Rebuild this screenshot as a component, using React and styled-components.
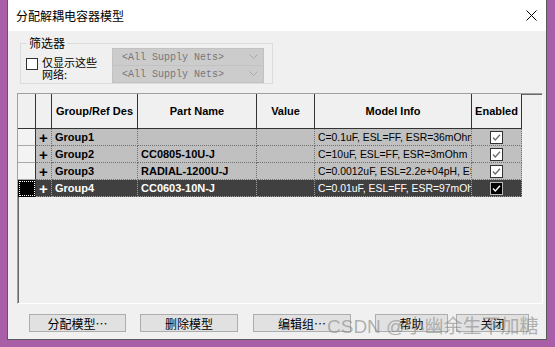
import React from 'react';
import styled, { createGlobalStyle } from 'styled-components';

const GlobalStyle = createGlobalStyle`
  html, body {
    margin: 0;
    padding: 0;
    background: #a95fa7;
    width: 555px;
    height: 347px;
    overflow: hidden;
  }
  * {
    box-sizing: border-box;
  }
`;

const cjk = `"Noto Sans CJK SC", "Noto Sans", sans-serif`;
const sans = `"Liberation Sans", Arial, sans-serif`;

const groups = [
  { name: 'Group1', part: '', value: '', model: 'C=0.1uF, ESL=FF, ESR=36mOhm' },
  { name: 'Group2', part: 'CC0805-10U-J', value: '', model: 'C=10uF, ESL=FF, ESR=3mOhm' },
  { name: 'Group3', part: 'RADIAL-1200U-J', value: '', model: 'C=0.0012uF, ESL=2.2e+04pH, ESR=1mOhm' },
  { name: 'Group4', part: 'CC0603-10N-J', value: '', model: 'C=0.01uF, ESL=FF, ESR=97mOhm', selected: true },
];

const buttons = [
  { label: '分配模型…', w: 97, ml: 12 },
  { label: '删除模型', w: 98, ml: 14 },
  { label: '编辑组…', w: 98, ml: 15 },
  { label: '帮助', w: 73, ml: 24 },
  { label: '关闭', w: 73, ml: 8 },
];

const Window = styled.div`
  position: relative;
  margin-left: 7px;
  width: 540px;
  height: 340px;
  background: #f0f0f0;
  border: 1px solid #5a5a5a;
  border-top: none;
  display: flex;
  flex-direction: column;
`;

const TitleBar = styled.div`
  height: 31px;
  background: #fff;
  display: flex;
  align-items: center;
  justify-content: space-between;
  padding: 0 9px 0 8px;
`;

const Title = styled.span`
  font-family: ${cjk};
  font-size: 12px;
  color: #000;
`;

const Body = styled.div`
  flex: 1;
  padding: 0 3px 0 9px;
  display: flex;
  flex-direction: column;
`;

const FilterBox = styled.fieldset`
  margin: 6px 0 0 3px;
  width: 253px;
  border: 1px solid #dcdcdc;
  padding: 0 8px 0 5px;
  min-width: 0;
`;

const Legend = styled.legend`
  font-family: ${cjk};
  font-size: 12px;
  line-height: 12px;
  padding: 0 2px;
  margin-left: 1px;
  color: #000;
`;

const FilterRow = styled.div`
  display: flex;
  align-items: flex-start;
  margin-top: -1px;
`;

const CheckBox = styled.div`
  width: 12px;
  height: 12px;
  margin-top: 10px;
  border: 1px solid #333;
  background: #fff;
`;

const FilterLabel = styled.div`
  width: 70px;
  margin: 8px 0 0 4px;
  font-family: ${cjk};
  font-size: 11px;
  line-height: 12px;
  color: #000;
`;

const Selects = styled.div`
  width: 152px;
  display: flex;
  flex-direction: column;
`;

const Select = styled.div`
  height: 18px;
  margin-top: ${(p) => (p.$first ? 0 : -1)}px;
  background: #cccccc;
  border: 1px solid #c2c2c2;
  display: flex;
  align-items: center;
  justify-content: space-between;
  padding: 0 5px 0 9px;
  font-family: "Liberation Mono", monospace;
  font-size: 10px;
  color: #777;
`;

const Table = styled.div`
  margin-top: 9px;
  height: 211px;
  background: #f0f0f0;
  border: 1px solid;
  border-color: #a0a0a0 #ffffff #ffffff #a0a0a0;
  box-shadow: inset 1px 1px 0 #696969;
  overflow: hidden;
`;

const Grid = styled.div`
  display: grid;
  grid-template-columns: 18px 16px 86px 119px 58px 157px 50px;
  grid-template-rows: 35px;
  grid-auto-rows: 17px;
  width: 504px;
`;

const HeadCell = styled.div`
  background: #f0f0f0;
  border-right: 1px solid #333;
  border-bottom: 1px solid #333;
  display: flex;
  align-items: center;
  justify-content: center;
  font-family: ${sans};
  font-weight: bold;
  font-size: 11px;
  color: #000;
  white-space: nowrap;
  overflow: hidden;
`;

const RowHead = styled.div`
  background: ${(p) => (p.$selected ? '#000' : '#f3f3f3')};
  border-right: 1px solid #333;
  border-bottom: 1px solid ${(p) => (p.$selected ? '#000' : '#a8a8a8')};
  outline: ${(p) => (p.$selected ? '1px dotted #fff' : 'none')};
  outline-offset: -2px;
`;

const Cell = styled.div`
  background: ${(p) => (p.$selected ? '#404040' : '#c0c0c0')};
  color: ${(p) => (p.$selected ? '#fff' : '#000')};
  border-right: 1px dotted ${(p) => (p.$selected ? '#a0a0a0' : '#707070')};
  border-bottom: 1px dotted ${(p) => (p.$selected ? '#a0a0a0' : '#707070')};
  display: flex;
  align-items: center;
  justify-content: ${(p) => (p.$center ? 'center' : 'flex-start')};
  padding-left: ${(p) => (p.$center ? 0 : 3)}px;
  font-family: ${sans};
  font-weight: ${(p) => (p.$bold ? 'bold' : 'normal')};
  font-size: ${(p) => p.$size || 11}px;
  white-space: nowrap;
  overflow: hidden;
`;

const ButtonRow = styled.div`
  display: flex;
  margin-top: 10px;
`;

const Button = styled.div`
  width: ${(p) => p.$w}px;
  margin-left: ${(p) => p.$ml}px;
  height: 18px;
  background: #e1e1e1;
  border: 1px solid #adadad;
  display: flex;
  align-items: center;
  justify-content: center;
  font-family: ${cjk};
  font-size: 12px;
  color: #000;
`;

const Watermark = styled.div`
  position: absolute;
  left: 319px;
  top: 316px;
  font-family: ${sans}, ${cjk};
  font-size: 19px;
  line-height: 22px;
  color: rgba(135, 135, 135, 0.6);
  white-space: nowrap;
  pointer-events: none;
`;

const CloseIcon = () => (
  <svg width="11" height="11" viewBox="0 0 11 11">
    <path d="M0.5 0.5 L10.5 10.5 M10.5 0.5 L0.5 10.5" stroke="#000" strokeWidth="1" fill="none" />
  </svg>
);

const Chevron = () => (
  <svg width="9" height="6" viewBox="0 0 9 6">
    <path d="M0.5 0.5 L4.5 4.5 L8.5 0.5" stroke="#a8a8a8" strokeWidth="1" fill="none" />
  </svg>
);

const Tick = ({ selected }) => (
  <svg width="13" height="13" viewBox="0 0 13 13">
    <rect x="0.5" y="0.5" width="12" height="12" fill={selected ? '#000' : '#fff'} stroke={selected ? '#bbb' : '#333'} />
    <path d="M3 6.5 L5.3 9 L10 3.8" stroke={selected ? '#fff' : '#6a6a6a'} strokeWidth="1.3" fill="none" />
  </svg>
);

const App = () => {
  return (
    <>
      <GlobalStyle />
      <Window>
        <TitleBar>
          <Title>分配解耦电容器模型</Title>
          <CloseIcon />
        </TitleBar>
        <Body>
          <FilterBox>
            <Legend>筛选器</Legend>
            <FilterRow>
              <CheckBox />
              <FilterLabel>
                仅显示这些
                <br />
                网络:
              </FilterLabel>
              <Selects>
                <Select $first>
                  &lt;All Supply Nets&gt;
                  <Chevron />
                </Select>
                <Select>
                  &lt;All Supply Nets&gt;
                  <Chevron />
                </Select>
              </Selects>
            </FilterRow>
          </FilterBox>

          <Table>
            <Grid>
              <HeadCell />
              <HeadCell />
              <HeadCell>Group/Ref Des</HeadCell>
              <HeadCell>Part Name</HeadCell>
              <HeadCell>Value</HeadCell>
              <HeadCell>Model Info</HeadCell>
              <HeadCell>Enabled</HeadCell>
              {groups.map((g) => (
                <React.Fragment key={g.name}>
                  <RowHead $selected={g.selected} />
                  <Cell $selected={g.selected} $center $bold $size={15}>
                    +
                  </Cell>
                  <Cell $selected={g.selected} $bold>
                    {g.name}
                  </Cell>
                  <Cell $selected={g.selected} $bold>
                    {g.part}
                  </Cell>
                  <Cell $selected={g.selected}>{g.value}</Cell>
                  <Cell $selected={g.selected} $size={10.4}>
                    {g.model}
                  </Cell>
                  <Cell $selected={g.selected} $center>
                    <Tick selected={g.selected} />
                  </Cell>
                </React.Fragment>
              ))}
            </Grid>
          </Table>

          <ButtonRow>
            {buttons.map((b) => (
              <Button key={b.label} $w={b.w} $ml={b.ml}>
                {b.label}
              </Button>
            ))}
          </ButtonRow>
        </Body>
        <Watermark>CSDN @小幽余生不加糖</Watermark>
      </Window>
    </>
  );
};

export default App;
